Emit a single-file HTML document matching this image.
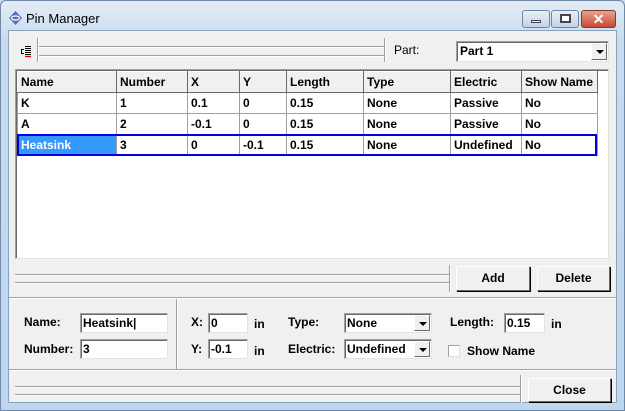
<!DOCTYPE html>
<html><head><style>
*{margin:0;padding:0;box-sizing:border-box}
body{width:625px;height:411px;overflow:hidden;background:#c9dcef;font-family:"Liberation Sans",Arial,sans-serif;font-size:12px;font-weight:bold;color:#000;position:relative}
.a{position:absolute}
.frame{left:0;top:0;width:625px;height:411px;border:1px solid #6e8aa8;border-radius:6px 6px 0 0;background:linear-gradient(#e3ecf6,#c8dbee 40px,#bfd6ee)}
.client{left:8px;top:30px;width:609px;height:373px;background:#f0f0f0;border:1px solid #8aa2bc}
.t{position:absolute;white-space:nowrap;line-height:14px}
.box{position:absolute;background:#fff;border:1px solid;border-color:#a0a0a0 #e3e3e3 #e3e3e3 #a0a0a0;box-shadow:inset 1px 1px 0 #696969}
.btn{position:absolute;background:#f0f0f0;border:1px solid;border-color:#fff #696969 #696969 #fff;box-shadow:1px 1px 0 #000;text-align:center;line-height:22px}
.hl{position:absolute;height:2px;border-top:1px solid #a0a0a0;border-bottom:1px solid #fff}
.vl{position:absolute;width:2px;border-left:1px solid #a0a0a0;border-right:1px solid #fff}
.dd{position:absolute;right:1px;top:1px;bottom:1px;width:16px;background:#f0f0f0;border:1px solid;border-color:#fff #696969 #696969 #fff}
.dd:after{content:"";position:absolute;left:4px;top:6px;border:4px solid transparent;border-top:4px solid #000;border-bottom:0}
table{border-collapse:collapse;position:absolute;left:17px;top:71px}
td{border:1px solid #a0a0a0;height:21px;padding:0 3px;vertical-align:middle}
tr.h td{background:#f0f0f0;border-color:#fff #696969 #696969 #fff;border-style:solid}
</style></head><body>
<div class="a frame"></div>
<svg class="a" style="left:9px;top:11px" width="13" height="14" viewBox="0 0 13 14"><path d="M6.5 0L13 7 6.5 14 0 7z" fill="#5b6db8"/><ellipse cx="6.5" cy="7" rx="4" ry="2" fill="none" stroke="#fff" stroke-width="1.2"/></svg>
<div class="t" style="left:26px;top:12px;font-weight:normal;font-size:13px;color:#000">Pin Manager</div>
<div class="a" style="left:522px;top:10px;width:28px;height:18px;border:1px solid #6f87a3;border-radius:3px;background:linear-gradient(#e9f0f8,#c2d3e6)"><div class="a" style="left:8px;top:9px;width:10px;height:3px;background:#fff;border:1px solid #445"></div></div>
<div class="a" style="left:551px;top:10px;width:28px;height:18px;border:1px solid #6f87a3;border-radius:3px;background:linear-gradient(#e9f0f8,#c2d3e6)"><div class="a" style="left:8px;top:3px;width:11px;height:9px;border:2px solid #445;background:#fff"></div></div>
<div class="a" style="left:581px;top:10px;width:35px;height:18px;border:1px solid #7a3a30;border-radius:3px;background:linear-gradient(#e8a393,#c74a33);color:#fff;text-align:center;font-size:14px;line-height:16px">✕</div>
<div class="a client"></div>
<svg class="a" style="left:20px;top:44px" width="12" height="14"><path d="M5 2.5h6M5 4.5h6M5 6.5h6M5 8.5h6M5 10.5h6" stroke="#000"/><path d="M5 12.5h6" stroke="#e00" stroke-width="1.3"/><path d="M4 5.5H1.5v4H4" stroke="#000" fill="none"/></svg>
<div class="vl" style="left:37px;top:38px;height:24px"></div>
<div class="hl" style="left:39px;top:46px;width:345px"></div>
<div class="hl" style="left:39px;top:55px;width:345px"></div>
<div class="vl" style="left:384px;top:38px;height:24px"></div>
<div class="t" style="left:394px;top:43px;font-weight:normal;font-size:12px">Part:</div>
<div class="box" style="left:456px;top:41px;width:153px;height:21px"><div class="t" style="left:3px;top:2px">Part 1</div><div class="dd"></div></div>
<div class="box" style="left:15px;top:69px;width:594px;height:190px"></div>
<table>
<tr class="h"><td style="width:99px">Name</td><td style="width:71px">Number</td><td style="width:52px">X</td><td style="width:47px">Y</td><td style="width:77px">Length</td><td style="width:87px">Type</td><td style="width:71px">Electric</td><td style="width:76px">Show Name</td></tr>
<tr><td>K</td><td>1</td><td>0.1</td><td>0</td><td>0.15</td><td>None</td><td>Passive</td><td>No</td></tr>
<tr><td>A</td><td>2</td><td>-0.1</td><td>0</td><td>0.15</td><td>None</td><td>Passive</td><td>No</td></tr>
<tr><td style="background:#3399ff;color:#fff">Heatsink</td><td>3</td><td>0</td><td>-0.1</td><td>0.15</td><td>None</td><td>Undefined</td><td>No</td></tr>
</table>
<div class="a" style="left:17px;top:134px;width:580px;height:22px;border:2px solid #0000e0"></div>
<div class="hl" style="left:15px;top:274px;width:435px"></div>
<div class="hl" style="left:15px;top:282px;width:435px"></div>
<div class="vl" style="left:449px;top:265px;height:27px"></div>
<div class="btn" style="left:456px;top:266px;width:74px;height:25px">Add</div>
<div class="btn" style="left:537px;top:266px;width:73px;height:25px">Delete</div>
<div class="hl" style="left:9px;top:297px;width:607px"></div>
<div class="vl" style="left:176px;top:299px;height:71px"></div>
<div class="hl" style="left:9px;top:369px;width:607px"></div>
<div class="t" style="left:24px;top:315px">Name:</div>
<div class="box" style="left:80px;top:313px;width:88px;height:20px"><div class="t" style="left:2px;top:2px">Heatsink|</div></div>
<div class="t" style="left:24px;top:342px">Number:</div>
<div class="box" style="left:80px;top:339px;width:88px;height:20px"><div class="t" style="left:2px;top:2px">3</div></div>
<div class="t" style="left:191px;top:315px">X:</div>
<div class="box" style="left:208px;top:313px;width:40px;height:20px"><div class="t" style="left:2px;top:2px">0</div></div>
<div class="t" style="left:254px;top:317px">in</div>
<div class="t" style="left:191px;top:342px">Y:</div>
<div class="box" style="left:208px;top:339px;width:40px;height:20px"><div class="t" style="left:2px;top:2px">-0.1</div></div>
<div class="t" style="left:254px;top:344px">in</div>
<div class="t" style="left:288px;top:315px">Type:</div>
<div class="box" style="left:344px;top:313px;width:88px;height:20px"><div class="t" style="left:2px;top:2px">None</div><div class="dd"></div></div>
<div class="t" style="left:288px;top:342px">Electric:</div>
<div class="box" style="left:344px;top:339px;width:88px;height:20px"><div class="t" style="left:2px;top:2px">Undefined</div><div class="dd"></div></div>
<div class="t" style="left:450px;top:315px">Length:</div>
<div class="box" style="left:504px;top:313px;width:41px;height:20px"><div class="t" style="left:2px;top:2px">0.15</div></div>
<div class="t" style="left:551px;top:317px">in</div>
<div class="box" style="left:448px;top:345px;width:12px;height:12px;box-shadow:none"></div>
<div class="t" style="left:467px;top:344px">Show Name</div>
<div class="hl" style="left:15px;top:386px;width:506px"></div>
<div class="hl" style="left:15px;top:394px;width:506px"></div>
<div class="vl" style="left:520px;top:375px;height:28px"></div>
<div class="btn" style="left:528px;top:378px;width:83px;height:24px">Close</div>
</body></html>
